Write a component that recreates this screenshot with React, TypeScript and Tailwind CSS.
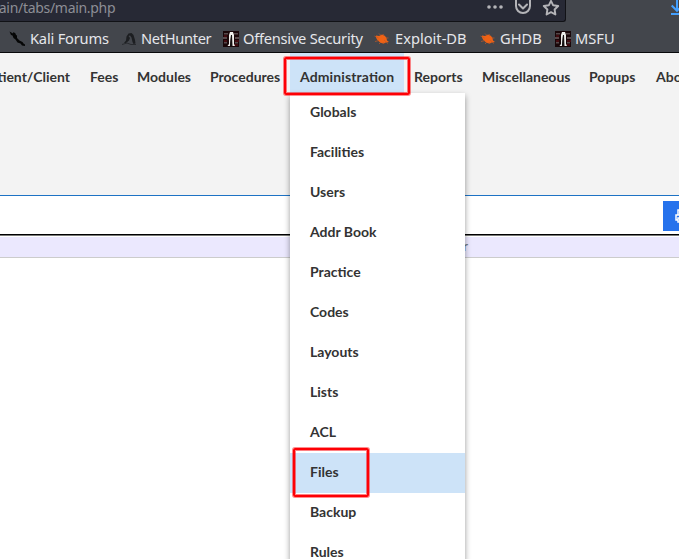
import React from "react";

function Skull() {
  return (
    <svg className="h-4 w-4 shrink-0" viewBox="0 0 16 16">
      <path d="M0 0h16v16H0z" fill="#190709" />
      <path d="M1 2h4v1.500H1zM11 2h4v1.500h-4zM0 6h4v2H0zM12 6h4v2h-4zM1 11h3v1.500H1zM12 11h3v1.500h-3z" fill="#57484a" />
      <path d="M1 4h3v2H1zM12 9h4v2h-4zM1 9h3v2H1zM11 13h4v2h-4z" fill="#420b10" />
      <path d="M7 1h3l1 3v9l1 2H9.500L9 4H8L7 15H4.500L6 13V4z" fill="#eeeeeb" />
      <path d="M8 4h1v11H7z" fill="#151111" />
    </svg>
  );
}

function Bug() {
  return (
    <svg className="h-4 w-4 shrink-0" viewBox="0 0 16 16">
      <path d="M2 4.500l3 .5 3-1.500 3 1.500 1.500 2 .5 2.500 2 1.500-3 .5-3 1-3-1-3-3-1-2z" fill="#ef6215" />
      <path d="M.5 5l4 2M1 10.500l4-1M5 13l2-2M5 2.500l2 2M9 3l1 2M10 9l4 3.500M12 7l2.500 0M9 11l1 2" fill="none" stroke="#c45a25" strokeWidth=".7" />
    </svg>
  );
}

function Knife() {
  return (
    <svg className="h-4 w-4 shrink-0" viewBox="0 0 16 16">
      <path d="M.5 .5l3.500 2 .5-1.500 2 1.500 .5 1.500 1 .5v2.500l2.500 2.500 3 1.500 1 1.500 1.500 1v1.500l-3-.5-1.500-2-3-1-2-3-2-1.500-1-2.500-1.500-.5z" fill="#050606" />
    </svg>
  );
}

function Hunter() {
  return (
    <svg className="h-4 w-4 shrink-0" viewBox="0 0 16 16">
      <path d="M3 12l2-2.500.5-4 2-3 3-.5 2 2 1.500 5 .5 3.500-2 .5-1-2-1-4.500L9 4.500 7.500 5l1.500 2-1 2.500L5 12z" fill="#1c1e21" />
      <path d="M1 13.500l5-1.500 4 1.500h5" fill="none" stroke="#282a2e" />
    </svg>
  );
}

const bookmarks = [
  { label: "Kali Forums", icon: <Knife />, box: "w-[112px] gap-[5px] tracking-[-0.2px]" },
  { label: "NetHunter", icon: <Hunter />, box: "w-[102px] gap-1 tracking-[-0.33px]" },
  { label: "Offensive Security", icon: <Skull />, box: "w-[151px] gap-1 tracking-[-0.25px]" },
  { label: "Exploit-DB", icon: <Bug />, box: "w-[106px] gap-[5px]" },
  { label: "GHDB", icon: <Bug />, box: "w-[75px] gap-1" },
  { label: "MSFU", icon: <Skull />, box: "w-[70px] gap-1" },
];

const menus = [
  { label: "Fees", width: "w-[47px]" },
  { label: "Modules", width: "w-[73px]" },
  { label: "Procedures", width: "w-[90px]" },
  { label: "Administration", width: "w-[114px]" },
  { label: "Reports", width: "w-[68px]" },
  { label: "Miscellaneous", width: "w-[107px]" },
  { label: "Popups", width: "w-[67px]" },
  { label: "About", width: "w-[60px]" },
];

const entries = ["Globals", "Facilities", "Users", "Addr Book", "Practice", "Codes", "Layouts", "Lists", "ACL", "Files", "Backup", "Rules"];

export default function App() {
  return (
    <div className="relative h-[559px] w-[679px] overflow-hidden bg-white font-['Lato',sans-serif] text-[#333]">
      <header className="h-[53px] border-b border-[#08090b] bg-[#43464c] font-['Noto_Sans',sans-serif]">
        <div className="flex h-[22px] justify-between">
          <div className="flex h-[22px] w-[566px] overflow-hidden rounded-br-[3px] border-r border-b border-[#111216] bg-[#272935]">
            <div className="w-[486px] shrink-0 overflow-hidden">
              <div className="-ml-[14px] text-[14px] leading-[15px] tracking-[-0.3px] whitespace-nowrap text-[#8d8e95]">main/tabs/main.php</div>
            </div>
            <svg className="h-[21px] w-[76px] shrink-0" viewBox="0 0 76 21" fill="none" stroke="#b4b4b8">
              <g fill="#b4b4b8" stroke="none"><circle cx="3" cy="7" r="1.8" /><circle cx="9" cy="7" r="1.8" /><circle cx="15" cy="7" r="1.8" /></g>
              <path d="M30 0v6a7 7 0 0 0 14 0V0M33 4.500l4 4 4-4" strokeWidth="2" strokeLinecap="round" strokeLinejoin="round" />
              <path d="M65 .8l2.200 4.500 5 .7-3.600 3.500.8 5-4.400-2.300-4.400 2.300.8-5L57.800 6l5-.7z" strokeWidth="1.900" strokeLinejoin="round" />
            </svg>
          </div>
          <svg className="h-4 w-2" viewBox="0 0 8 16" fill="none" stroke="#45a1ff" strokeWidth="2">
            <path d="M6 0v11M.7 5.500L6 10.800l5-5M0 14h8" />
          </svg>
        </div>
        <nav className="flex h-[30px] items-center pt-1 pl-[9px] text-[14.667px] leading-5 text-[#e6e7eb]">
          {bookmarks.map((b) => (
            <div key={b.label} className={`flex shrink-0 items-center whitespace-nowrap ${b.box}`}>
              {b.icon}
              <span className="-mt-0.5">{b.label}</span>
            </div>
          ))}
        </nav>
      </header>

      <div className="h-[143px] border-b border-[#1d72c4] bg-[#f3f3f3]">
        <nav className="flex h-10 text-[14px] font-bold">
          <div className="flex w-20 shrink-0 items-center justify-end pt-1.5 pr-2.5 whitespace-nowrap">Patient/Client</div>
          {menus.map((m) => (
            <div
              key={m.label}
              className={`flex shrink-0 items-center pt-1.5 pl-2.5 whitespace-nowrap ${m.width} ${m.label === "Administration" ? "bg-[#cde3f8] tracking-[0.12px] [font-feature-settings:'liga']" : ""}`}
            >
              {m.label}
            </div>
          ))}
        </nav>
      </div>
      <div className="flex h-[39px] justify-end border-b border-black pt-[5px] shadow-[0_1px_0_#777]">
        <div className="flex h-[30px] w-4 items-center overflow-hidden bg-[#2672ec] pl-3">
          <svg className="h-3.5 w-3.5 shrink-0" viewBox="0 0 14 14" fill="none" stroke="white" strokeWidth="1.500">
            <path d="M3 6V1h8v5M3 11H1V6h12v5h-2M3 9h8v4H3z" />
          </svg>
        </div>
      </div>
      <div className="mt-[2px] flex h-[21px] items-center border-b border-[#ccc] bg-[#ebe8fe]">
        <div className="w-[468px] pb-0.5 text-right text-[14px] leading-5 text-[#73777f]">Calendar</div>
      </div>

      <div className="absolute top-[93px] left-[290px] w-[175px] bg-white text-[14px] font-bold shadow-[0_3px_6px_rgba(0,0,0,0.4)]">
        {entries.map((e) => (
          <div key={e} className={`flex h-10 items-center pb-1 pl-5 ${e === "Files" ? "bg-[#cde3f8]" : ""}`}>
            {e}
          </div>
        ))}
      </div>
      <div className="absolute top-[57px] left-[284px] h-[38px] w-[126px] rounded-[2px] border-2 border-[#fe0005] shadow-[0_0_0_1px_rgba(254,0,5,0.45),inset_0_0_0_1px_rgba(254,0,5,0.5)]" />
      <div className="absolute top-[448px] left-[293px] h-[49px] w-[76px] rounded-[2px] border-2 border-[#fe0005] shadow-[0_0_0_1px_rgba(254,0,5,0.45),inset_0_0_0_1px_rgba(254,0,5,0.5)]" />
    </div>
  );
}
